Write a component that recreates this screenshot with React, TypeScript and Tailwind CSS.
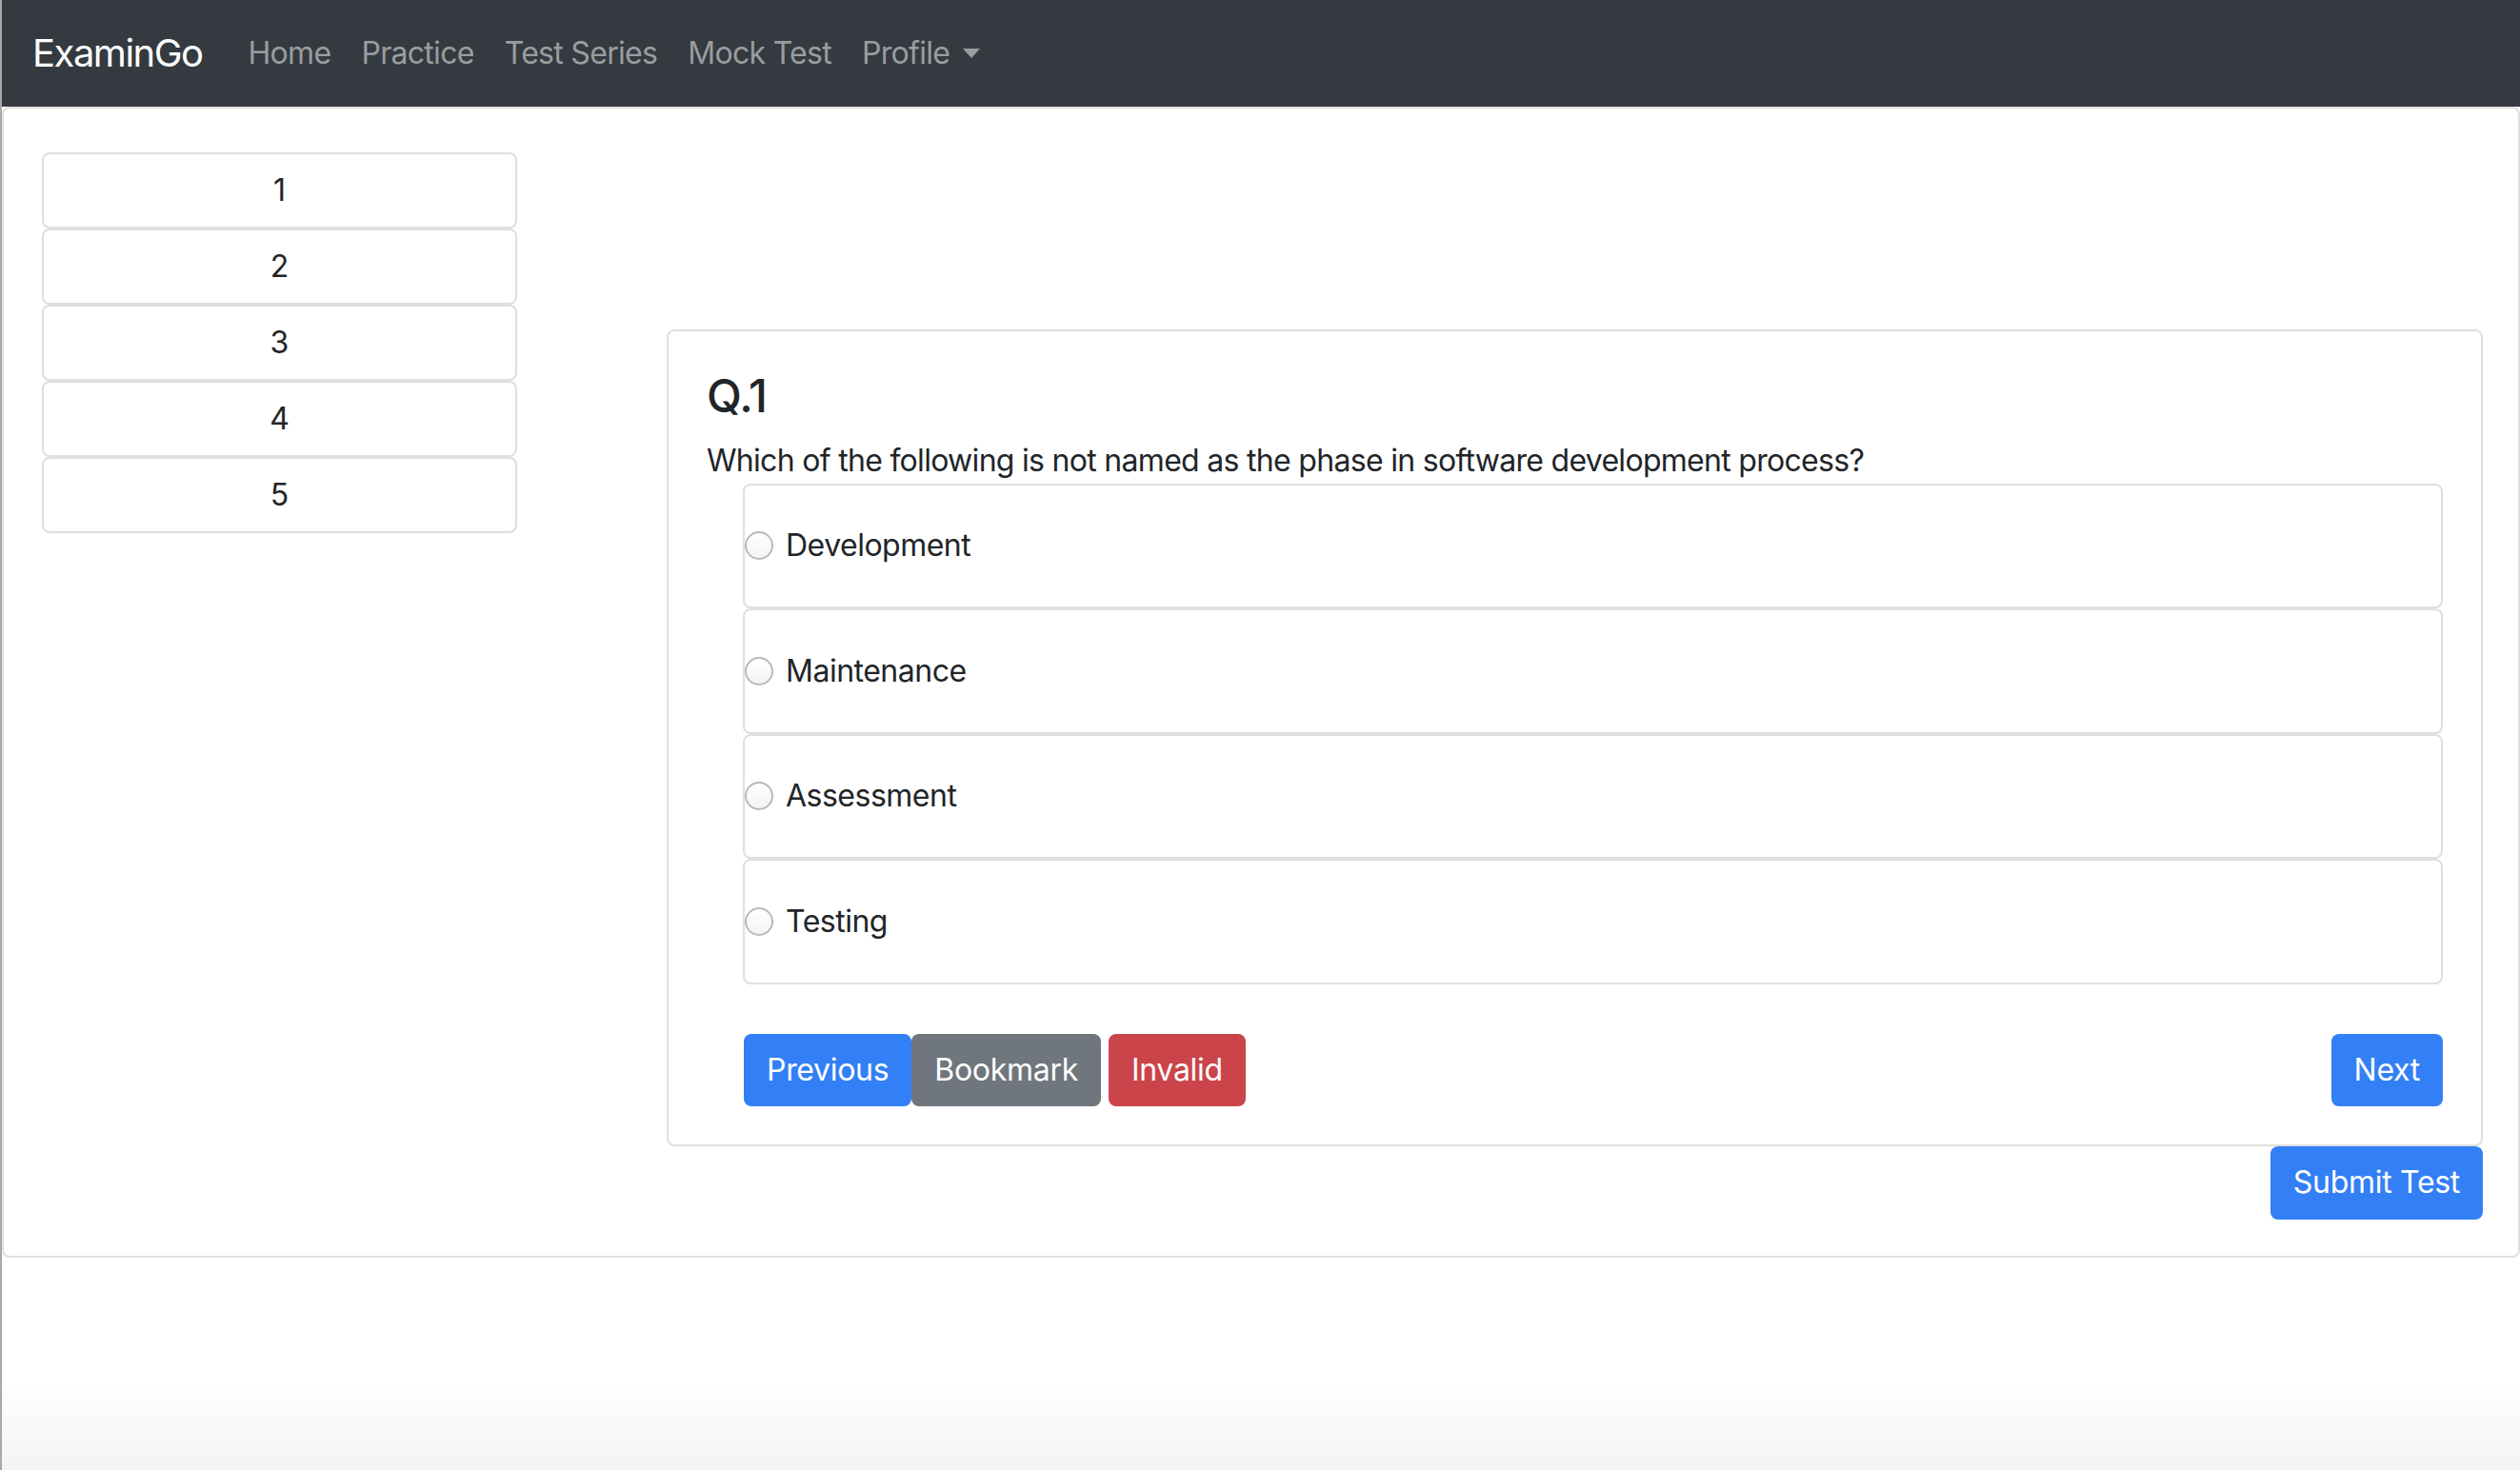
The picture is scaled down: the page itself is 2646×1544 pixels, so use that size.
const navLinks = ["Home", "Practice", "Test Series", "Mock Test"];
const questions = [1, 2, 3, 4, 5];
const options = ["Development", "Maintenance", "Assessment", "Testing"];

const Radio: React.FC = () => (
  <span className="w-[30px] h-[30px] shrink-0 rounded-full border-2 border-[#b9b9b9] bg-gradient-to-b from-white to-[#f3f3f3]" />
);

export default function App() {
  return (
    <div
      className="h-[1544px] flex flex-col border-l-[2px] border-[#a9a9a9] bg-white text-[#212529] overflow-hidden"
      style={{ fontFamily: "Inter, 'Liberation Sans', sans-serif" }}
    >
      {/* navbar */}
      <nav className="h-[112px] shrink-0 bg-[#343a40] flex items-center pl-[32px]">
        <span className="text-[40px] text-white mr-[32px] tracking-[-1.5px]">ExaminGo</span>
        <ul className="flex items-center">
          {navLinks.map((l) => (
            <li key={l} className="px-[16px] text-[32px] text-[#9a9da0] tracking-[-0.7px]">
              {l}
            </li>
          ))}
          <li className="px-[16px] text-[32px] text-[#9a9da0] flex items-center tracking-[-0.7px]">
            Profile
            <span className="ml-[14px] w-0 h-0 border-l-[9px] border-r-[9px] border-t-[10px] border-l-transparent border-r-transparent border-t-[#9a9da0]" />
          </li>
        </ul>
      </nav>

      {/* page card */}
      <div className="border-2 border-[#dfdfdf] rounded-lg pt-[46px] pb-[38px] pl-[40px] pr-[37px] flex">
        <div className="w-[499px] shrink-0 flex flex-col self-start">
          {questions.map((n) => (
            <div
              key={n}
              className="h-[80px] border-2 border-[#dfdfdf] rounded-lg flex items-center justify-center text-[32px]"
            >
              {n}
            </div>
          ))}
        </div>

        <div className="ml-[157px] flex-1 pt-[186px] flex flex-col items-end">
          <div className="w-full border-2 border-[#dfdfdf] rounded-lg px-[40px] pt-[39px] pb-[40px]">
            <h4 className="text-[48px] font-medium leading-[1.2] mb-[15px] tracking-[-0.5px]">Q.1</h4>
            <p className="text-[32px] leading-[48px] tracking-[-0.7px]">
              Which of the following is not named as the phase in software development process?
            </p>
            <div className="ml-[39px] flex flex-col">
              {options.map((o) => (
                <label
                  key={o}
                  className="h-[131.5px] border-2 border-[#dfdfdf] rounded-lg flex items-center -ml-[1px]"
                >
                  <Radio />
                  <span className="ml-[13px] text-[32px] tracking-[-0.5px]">{o}</span>
                </label>
              ))}
            </div>
            <div className="ml-[39px] mt-[52px] flex items-center">
              <button className="h-[76px] px-[24px] rounded-lg bg-[#337ff6] text-white text-[32px] tracking-[-0.3px]">
                Previous
              </button>
              <button className="h-[76px] px-[24px] rounded-lg bg-[#6f767d] text-white text-[32px] tracking-[-0.3px]">
                Bookmark
              </button>
              <button className="ml-[8px] h-[76px] px-[24px] rounded-lg bg-[#cb444a] text-white text-[32px] tracking-[-0.3px]">
                Invalid
              </button>
              <button className="ml-auto h-[76px] px-[24px] rounded-lg bg-[#337ff6] text-white text-[32px] tracking-[-0.3px]">
                Next
              </button>
            </div>
          </div>
          <button className="h-[77px] px-[24px] rounded-lg bg-[#337ff6] text-white text-[32px] tracking-[-0.3px]">
            Submit Test
          </button>
        </div>
      </div>

      <div className="flex-1 flex flex-col justify-end">
        <div className="h-[90px] bg-gradient-to-b from-white to-[#f3f3f3]" />
      </div>
    </div>
  );
}
